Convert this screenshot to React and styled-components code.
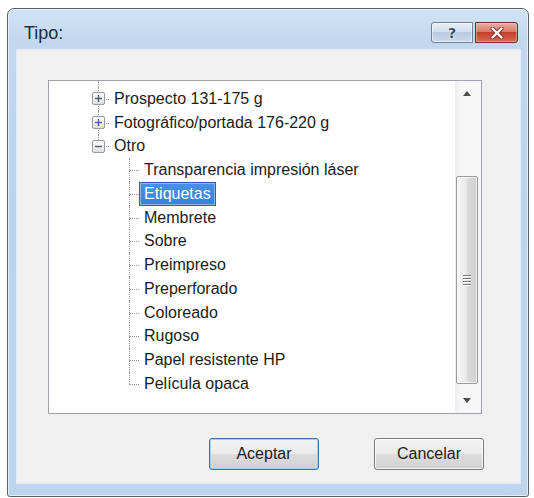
import React from 'react';
import styled, { createGlobalStyle } from 'styled-components';

const GlobalStyle = createGlobalStyle`
  html, body { margin: 0; padding: 0; background: #ffffff; }
  body { font-family: "Liberation Sans", Arial, sans-serif; }
  * { box-sizing: border-box; }
`;

const Page = styled.div`
  width: 534px;
  height: 498px;
  padding: 8px 5px 1px 7px;
`;

const Window = styled.div`
  width: 522px;
  height: 489px;
  display: flex;
  flex-direction: column;
  border: 1px solid #56606d;
  border-radius: 7px 7px 3px 3px;
  padding: 0 8px 13px 9px;
  background: linear-gradient(180deg, #d3e3f5 0%, #c3d8ef 6%, #bcd3ec 40%, #bfd5ed 100%);
  box-shadow: inset 0 0 0 1px rgba(255, 255, 255, 0.55);
`;

const TitleBar = styled.div`
  height: 41px;
  flex: none;
  display: flex;
  align-items: flex-start;
  padding: 13px 2px 0 7px;
`;

const Title = styled.div`
  flex: 1;
  font-family: "Liberation Sans", Arial, sans-serif;
  font-size: 18px;
  line-height: 22px;
  color: #1f2c40;
`;

const CaptionGroup = styled.div`
  display: flex;
  gap: 2px;
`;

const HelpButton = styled.div`
  width: 42px;
  height: 21px;
  border: 1px solid #6f819a;
  border-radius: 3px 0 0 3px;
  background: linear-gradient(180deg, #e6eef7 0%, #d3dfee 45%, #b9cbe2 50%, #cbdbee 100%);
  display: flex;
  align-items: center;
  justify-content: center;
  font-family: "DejaVu Sans", sans-serif;
  font-weight: bold;
  font-size: 14px;
  color: #3a4a60;
  text-shadow: 0 0 2px #ffffff, 0 0 1px #ffffff;
  box-shadow: inset 0 0 0 1px rgba(255, 255, 255, 0.5);
`;

const CloseButton = styled.div`
  width: 43px;
  height: 21px;
  border: 1px solid #6e2b24;
  border-radius: 0 3px 3px 0;
  background: linear-gradient(180deg, #eab0a6 0%, #da7b6c 45%, #c7402f 50%, #d76a52 100%);
  display: flex;
  align-items: center;
  justify-content: center;
  box-shadow: inset 0 0 0 1px rgba(255, 210, 200, 0.45);
`;

const Client = styled.div`
  flex: 1;
  display: flex;
  flex-direction: column;
  background: #f0f0f0;
  padding: 30px 38px 0 31px;
  box-shadow: 0 0 0 1px #e4edf7;
`;

const ListBox = styled.div`
  height: 334px;
  flex: none;
  display: flex;
  border: 1px solid #9ea3ab;
  background: #ffffff;
`;

const Tree = styled.div`
  flex: 1;
  display: flex;
  flex-direction: column;
  padding-top: 6px;
  overflow: hidden;
`;

const LeadLine = styled.div`
  height: 6px;
  margin: -6px 0 0 49px;
  border-left: 1px dotted #9a9a9a;
  flex: none;
`;

const Row = styled.div`
  height: 23.75px;
  flex: none;
  display: flex;
  align-items: stretch;
  padding-left: ${p => p.$indent}px;
`;

const Gutter = styled.span`
  position: relative;
  flex: none;
  width: ${p => p.$width}px;
  display: flex;
  align-items: center;
  &::before {
    content: '';
    position: absolute;
    left: ${p => p.$lineX}px;
    top: 0;
    height: ${p => (p.$last ? '50%' : '100%')};
    border-left: 1px dotted #9a9a9a;
  }
  &::after {
    content: '';
    position: absolute;
    left: ${p => p.$stubFrom}px;
    right: 0;
    top: 50%;
    border-top: 1px dotted #9a9a9a;
  }
`;

const Expander = styled.span`
  position: relative;
  z-index: 1;
  width: 13px;
  height: 13px;
  border: 1px solid #9b9b9b;
  border-radius: 2px;
  background: linear-gradient(180deg, #ffffff 0%, #f2f2f2 50%, #dcdcdc 100%);
  display: flex;
  align-items: center;
  justify-content: center;
`;

const Label = styled.span`
  display: flex;
  align-items: center;
  padding: 0 4px;
  border: 1px solid ${p => (p.$selected ? '#2a62b0' : 'transparent')};
  background: ${p => (p.$selected ? 'linear-gradient(180deg, #4a92e4 0%, #3a80d8 100%)' : 'transparent')};
  box-shadow: ${p => (p.$selected ? 'inset 0 0 0 1px #86b7ee' : 'none')};
  color: ${p => (p.$selected ? '#ffffff' : '#1c1c1c')};
  font-size: 16px;
  white-space: nowrap;
`;

const ScrollBar = styled.div`
  width: 26px;
  flex: none;
  display: flex;
  flex-direction: column;
  background: linear-gradient(90deg, #ececec 0%, #f6f6f6 20%, #f6f6f6 100%);
`;

const ArrowButton = styled.div`
  height: 25px;
  flex: none;
  display: flex;
  align-items: center;
  justify-content: center;
  padding-right: 2px;
`;

const Track = styled.div`
  flex: 1;
  display: flex;
  flex-direction: column;
  padding: 0 3px 0 1px;
`;

const Thumb = styled.div`
  flex: none;
  border: 1px solid #9c9c9c;
  border-radius: 2px;
  background: linear-gradient(90deg, #f6f6f6 0%, #ebebeb 45%, #d9d9d9 55%, #cfcfcf 100%);
  box-shadow: inset 0 0 0 1px rgba(255, 255, 255, 0.7);
  display: flex;
  align-items: center;
  justify-content: center;
`;

const Grip = styled.div`
  width: 8px;
  display: flex;
  flex-direction: column;
  gap: 2px;
`;

const GripLine = styled.span`
  height: 1px;
  background: #7b7b7b;
  box-shadow: 0 1px 0 #ffffff;
`;

const ButtonRow = styled.div`
  display: flex;
  justify-content: flex-end;
  gap: 55px;
  margin: 24px -2px 0 0;
`;

const DialogButton = styled.div`
  width: 110px;
  height: 32px;
  display: flex;
  align-items: center;
  justify-content: center;
  border: 1px solid ${p => (p.$default ? '#3d73ad' : '#7a7a7a')};
  border-radius: 3px;
  background: linear-gradient(180deg, #f3f3f3 0%, #ebebeb 48%, #dddddd 52%, #d1d1d1 100%);
  box-shadow: inset 0 0 0 1px ${p => (p.$default ? '#9fd0f2' : 'rgba(255,255,255,0.75)')};
  font-size: 16px;
  color: #1c1c1c;
`;

const PlusIcon = ({ color }) => (
  <svg width="9" height="9" viewBox="0 0 9 9">
    <path d="M1 4.5H8" stroke={color} strokeWidth="1.4" />
    <path d="M4.5 1V8" stroke={color} strokeWidth="1.4" />
  </svg>
);

const MinusIcon = ({ color }) => (
  <svg width="9" height="9" viewBox="0 0 9 9">
    <path d="M1 4.5H8" stroke={color} strokeWidth="1.4" />
  </svg>
);

const ArrowGlyph = ({ down }) => (
  <svg width="8" height="5" viewBox="0 0 8 5">
    <path d={down ? 'M0 0H8L4 5Z' : 'M0 5H8L4 0Z'} fill="#4a4a4a" />
  </svg>
);

const CloseGlyph = () => (
  <svg width="14" height="12" viewBox="0 0 14 12">
    <path d="M2.5 1.5L11.5 10.5M11.5 1.5L2.5 10.5" stroke="#7a2a22" strokeWidth="4" strokeLinecap="round" />
    <path d="M2.5 1.5L11.5 10.5M11.5 1.5L2.5 10.5" stroke="#ffffff" strokeWidth="2.4" strokeLinecap="round" />
  </svg>
);

const roots = [
  { label: 'Prospecto 131-175 g', expanded: false, glyph: '#505a66' },
  { label: 'Fotográfico/portada 176-220 g', expanded: false, glyph: '#4d55b8' },
  {
    label: 'Otro',
    expanded: true,
    glyph: '#505a66',
    children: [
      'Transparencia impresión láser',
      'Etiquetas',
      'Membrete',
      'Sobre',
      'Preimpreso',
      'Preperforado',
      'Coloreado',
      'Rugoso',
      'Papel resistente HP',
      'Película opaca',
    ],
  },
];

const SELECTED = 'Etiquetas';

const scroll = { offset: 70, size: 208 };

export default function App() {
  return (
    <>
      <GlobalStyle />
      <Page>
        <Window>
          <TitleBar>
            <Title>Tipo:</Title>
            <CaptionGroup>
              <HelpButton>?</HelpButton>
              <CloseButton>
                <CloseGlyph />
              </CloseButton>
            </CaptionGroup>
          </TitleBar>
          <Client>
            <ListBox>
              <Tree>
                <LeadLine />
                {roots.map((node, i) => (
                  <React.Fragment key={node.label}>
                    <Row $indent={43}>
                      <Gutter $width={17} $lineX={6} $stubFrom={12} $last={i === roots.length - 1}>
                        <Expander>
                          {node.expanded ? <MinusIcon color={node.glyph} /> : <PlusIcon color={node.glyph} />}
                        </Expander>
                      </Gutter>
                      <Label>{node.label}</Label>
                    </Row>
                    {node.expanded &&
                      node.children.map((child, j) => (
                        <Row key={child} $indent={80}>
                          <Gutter $width={10} $lineX={0} $stubFrom={0} $last={j === node.children.length - 1} />
                          <Label $selected={child === SELECTED}>{child}</Label>
                        </Row>
                      ))}
                  </React.Fragment>
                ))}
              </Tree>
              <ScrollBar>
                <ArrowButton>
                  <ArrowGlyph />
                </ArrowButton>
                <Track>
                  <Thumb style={{ marginTop: scroll.offset, height: scroll.size }}>
                    <Grip>
                      <GripLine />
                      <GripLine />
                      <GripLine />
                      <GripLine />
                    </Grip>
                  </Thumb>
                </Track>
                <ArrowButton>
                  <ArrowGlyph down />
                </ArrowButton>
              </ScrollBar>
            </ListBox>
            <ButtonRow>
              <DialogButton $default>Aceptar</DialogButton>
              <DialogButton>Cancelar</DialogButton>
            </ButtonRow>
          </Client>
        </Window>
      </Page>
    </>
  );
}
